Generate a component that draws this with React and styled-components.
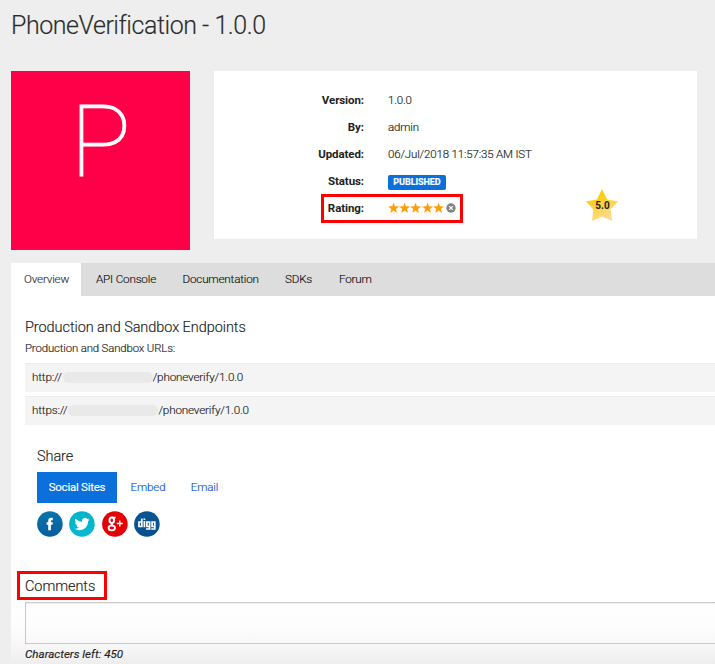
import React from "react";
import styled, { createGlobalStyle, css } from "styled-components";

const GlobalStyle = createGlobalStyle`
  * { box-sizing: border-box; }
  html, body { margin: 0; padding: 0; height: 664px; overflow: hidden; }
  body { background: #eeeeee; color: #222; font-family: Roboto, sans-serif; font-weight: 300; font-size: 12px; -webkit-text-stroke: 0.15px currentColor; }
  #root { height: 664px; }
`;

const Page = styled.div`
  width: 715px;
  height: 664px;
  overflow: hidden;
  padding-left: 11px;
`;

const Title = styled.h1`
  margin: 0;
  height: 71px;
  padding-top: 9px;
  color: #2c2c2c;
  font-size: 25px;
  font-weight: 300;
  letter-spacing: -0.46px;
  line-height: 34px;
  white-space: nowrap;
`;

const Summary = styled.section`
  display: flex;
  align-items: flex-start;
  height: 192px;
`;

const Thumbnail = styled.div`
  width: 179px;
  height: 179px;
  margin-right: 24px;
  background: #ff0048;
  color: #fff;
  text-align: center;
  font-size: 101px;
  font-weight: 100;
  line-height: 142px;
  -webkit-text-stroke: 1px #fff;
`;

const InfoCard = styled.div`
  display: flex;
  width: 483px;
  height: 168px;
  padding-top: 16px;
  background: #fff;
`;

const Details = styled.dl`
  display: grid;
  grid-template-columns: 150px 190px;
  grid-auto-rows: 27px;
  column-gap: 24px;
  margin: 0;
  height: 135px;
  line-height: 27px;
`;

const Term = styled.dt`
  font-size: 11.5px;
  font-weight: 700;
  letter-spacing: -0.08px;
  text-align: right;
  -webkit-text-stroke: 0;
`;

const Value = styled.dd`
  display: flex;
  align-items: center;
  margin: 0;
  font-size: 11.5px;
  letter-spacing: -0.16px;
  white-space: nowrap;
`;

const StatusBadge = styled.span`
  width: 58px;
  height: 15px;
  margin-top: 2px;
  border-radius: 2px;
  background: #0b70dc;
  color: #fff;
  font-size: 9px;
  font-weight: 700;
  letter-spacing: -0.05px;
  line-height: 15px;
  text-align: center;
`;

const highlight = css`
  border: 3px solid #ff0000;
`;

const RatingRow = styled.div`
  ${highlight}
  grid-column: 1 / -1;
  display: flex;
  align-items: center;
  width: 142px;
  height: 29px;
  margin: -1px 0 0 107px;
  padding-left: 3px;
`;

const RatingTerm = styled(Term)`
  width: 37px;
  margin-right: 24px;
`;

const Stars = styled.dd`
  display: flex;
  align-items: center;
  margin: 0 0 2px;
`;

const ScoreBadge = styled.div`
  display: grid;
  place-items: center;
  width: 32px;
  height: 33px;
  margin: 102px 0 0 8px;
  font-size: 10px;
  font-weight: 700;
  -webkit-text-stroke: 0;

  & > * { grid-area: 1 / 1; }
  & > span { padding-left: 1px; }
`;

const TabBar = styled.nav`
  display: flex;
  height: 33px;
  background: #dddddd;
`;

const Tab = styled.a`
  width: ${(p) => p.$width}px;
  padding-left: ${(p) => p.$inset}px;
  background: ${(p) => (p.$active ? "#fff" : "transparent")};
  color: ${(p) => (p.$active ? "#333" : "#111")};
  font-size: 11.7px;
  letter-spacing: -0.2px;
  line-height: 33px;
  white-space: nowrap;
`;

const Content = styled.main`
  display: flex;
  flex-direction: column;
  height: 368px;
  padding: 22px 0 0 14px;
  background: linear-gradient(#fff 300px, #fdfdfd 330px, #f7f7f7 350px, #eeeeee 368px);
`;

const Heading = styled.h2`
  margin: 0;
  font-size: 14.5px;
  font-weight: 300;
  letter-spacing: -0.07px;
  line-height: 20px;
`;

const Caption = styled.p`
  margin: 0;
  height: 25px;
  font-size: 11.4px;
  letter-spacing: -0.14px;
  line-height: 21px;
`;

const Endpoint = styled.div`
  display: flex;
  align-items: center;
  height: 29px;
  margin-bottom: 4px;
  padding: 0 0 2px 7px;
  border-top: 1px solid #ececec;
  background: #f4f4f4;
  font-size: 11.7px;
  letter-spacing: -0.18px;
`;

const Redaction = styled.span`
  width: ${(p) => p.$width}px;
  height: 11px;
  margin-left: 1px;
  border-radius: 5px;
  background: #e9e9e9;
`;

const Share = styled.section`
  height: 142px;
  padding: 18px 0 0 12px;
`;

const ShareTabs = styled.div`
  display: flex;
  height: 31px;
  margin-top: 5px;
`;

const ShareTab = styled.a`
  width: ${(p) => p.$width}px;
  background: ${(p) => (p.$active ? "#0b70dc" : "transparent")};
  color: ${(p) => (p.$active ? "#fff" : "#0e55dd")};
  font-size: 11.5px;
  font-weight: ${(p) => (p.$active ? 400 : 300)};
  letter-spacing: ${(p) => (p.$active ? -0.25 : -0.12)}px;
  line-height: 31px;
  text-align: center;
`;

const SocialRow = styled.div`
  display: flex;
  gap: 6.3px;
  margin-top: 8px;
`;

const CommentsTitle = styled.div`
  ${highlight}
  width: 90px;
  height: 29px;
  margin-left: -8px;
  padding: 3px 0 0 5px;
`;

const CommentInput = styled.textarea`
  flex: none;
  display: block;
  width: 700px;
  height: 42px;
  margin-top: 2px;
  border: 1px solid #c8c8c8;
  background: transparent;
  box-shadow: inset 0 1px 1px rgba(0, 0, 0, 0.06);
  resize: none;
  outline: none;
`;

const Counter = styled.p`
  margin: 1px 0 0;
  font-size: 11.6px;
  font-style: italic;
  font-weight: 400;
  line-height: 19px;
`;

const starPath = "M6 .2 7.4 4.2 11.9 4.3 8.4 7 9.7 11.4 6 8.8 2.3 11.4 3.6 7 .1 4.3 4.6 4.2Z";

function Star() {
  return (
    <svg width="11.2" height="12" viewBox="0 0 12 12"><path d={starPath} fill="#ff9c08" /></svg>
  );
}

function ClearIcon() {
  return (
    <svg width="10" height="10" viewBox="0 0 9 9">
      <circle cx="4.5" cy="4.5" r="4.2" fill="#808080" />
      <path d="M2.8 2.8 6.2 6.2M6.2 2.8 2.8 6.2" stroke="#fff" strokeWidth="1.1" />
    </svg>
  );
}

const ClearButton = styled.span`
  display: flex;
  margin-left: 2px;
`;

function ScoreStar() {
  return (
    <svg width="32" height="33" viewBox="0 0 32 33">
      <defs>
        <linearGradient id="gold" x1="0" y1="0" x2="0.45" y2="1">
          <stop offset="0.25" stopColor="#fccb05" />
          <stop offset="1" stopColor="#ffdb91" />
        </linearGradient>
      </defs>
      <path d="M16 .2 21.4 10.6 32 12.4 24.5 20.6 26.3 32 16 27.7 6 32 7.4 20.6 0 12.4 10.8 10.6Z" fill="url(#gold)" />
    </svg>
  );
}

function SocialIcon({ id, from, to, children }) {
  return (
    <svg width="26" height="26" viewBox="0 0 26 26">
      <defs>
        <linearGradient id={id} x1="0" y1="0" x2="0" y2="1">
          <stop offset="0" stopColor={from} />
          <stop offset="1" stopColor={to} />
        </linearGradient>
      </defs>
      <circle cx="12.9" cy="13" r="12.8" fill={`url(#${id})`} />
      {children}
    </svg>
  );
}

const tabs = [
  ["Overview", 70, 13],
  ["API Console", 87, 15],
  ["Documentation", 103, 14.5],
  ["SDKs", 54, 14],
  ["Forum", 80, 14],
];

export default function App() {
  return (
    <>
      <GlobalStyle />
      <Page>
        <Title>PhoneVerification - 1.0.0</Title>
        <Summary>
          <Thumbnail>P</Thumbnail>
          <InfoCard>
            <Details>
              <Term>Version:</Term><Value>1.0.0</Value>
              <Term>By:</Term><Value>admin</Value>
              <Term>Updated:</Term><Value>06/Jul/2018 11:57:35 AM IST</Value>
              <Term>Status:</Term><Value><StatusBadge>PUBLISHED</StatusBadge></Value>
              <RatingRow>
                <RatingTerm>Rating:</RatingTerm>
                <Stars>
                  {[1, 2, 3, 4, 5].map((n) => <Star key={n} />)}
                  <ClearButton><ClearIcon /></ClearButton>
                </Stars>
              </RatingRow>
            </Details>
            <ScoreBadge><ScoreStar /><span>5.0</span></ScoreBadge>
          </InfoCard>
        </Summary>
        <TabBar>
          {tabs.map(([label, width, inset], i) => (
            <Tab key={label} $width={width} $inset={inset} $active={i === 0}>{label}</Tab>
          ))}
        </TabBar>
        <Content>
          <Heading>Production and Sandbox Endpoints</Heading>
          <Caption>Production and Sandbox URLs:</Caption>
          <Endpoint>http://<Redaction $width={90} />/phoneverify/1.0.0</Endpoint>
          <Endpoint>https://<Redaction $width={90} />/phoneverify/1.0.0</Endpoint>
          <Share>
            <Heading>Share</Heading>
            <ShareTabs>
              <ShareTab $width={80} $active>Social Sites</ShareTab>
              <ShareTab $width={62}>Embed</ShareTab>
              <ShareTab $width={51}>Email</ShareTab>
            </ShareTabs>
            <SocialRow>
              <SocialIcon id="fb" from="#0874ad" to="#095c9d">
                <path d="M11.2 19.3V13.7H9.6V11.2H11.2V9.7C11.2 7.6 12.3 6.8 14.2 6.8H15.8V9.2H14.8C14.1 9.2 13.9 9.5 13.9 10.1V11.2H15.8L15.5 13.7H13.9V19.3Z" fill="#fff" />
              </SocialIcon>
              <SocialIcon id="tw" from="#00b5ca" to="#08b7d0">
                <path transform="translate(5.5 5.5) scale(.63)" d="M23.95 4.57a10 10 0 0 1-2.82.77 4.96 4.96 0 0 0 2.16-2.72c-.95.55-2 .95-3.12 1.18a4.92 4.92 0 0 0-8.38 4.48C7.69 8.09 4.07 6.13 1.64 3.16a4.92 4.92 0 0 0 1.52 6.57 4.9 4.9 0 0 1-2.23-.61v.06a4.92 4.92 0 0 0 3.95 4.83 5 5 0 0 1-2.21.08 4.94 4.94 0 0 0 4.6 3.42A9.87 9.87 0 0 1 0 19.54a13.99 13.99 0 0 0 7.55 2.21c9.06 0 14.01-7.5 14.01-13.98 0-.21 0-.42-.02-.63a9.94 9.94 0 0 0 2.41-2.57Z" fill="#fff" />
              </SocialIcon>
              <SocialIcon id="gp" from="#e50005" to="#e10006">
                <g fill="none" stroke="#fff">
                  <ellipse cx="9.8" cy="9.3" rx="2.3" ry="2.8" strokeWidth="2" />
                  <path d="M10 6.6H13.6M10.6 12.2C8.2 13 9.8 13.8 11.5 14.9" strokeWidth="1.7" />
                  <ellipse cx="9.8" cy="17" rx="3.2" ry="2.3" strokeWidth="1.8" />
                  <path d="M14.8 12.5H20.8M17.8 9.5V15.5" strokeWidth="1.4" />
                </g>
              </SocialIcon>
              <SocialIcon id="dg" from="#0a5595" to="#07508f">
                <g fill="none" stroke="#fff" strokeWidth="1.7">
                  <path d="M7.8 7.5V15.5H5V11H7.8M10.4 10.1V16.3M10.4 7.5V9M15.6 15.5H12.9V11H15.6V18H12M20.8 15.5H18.1V11H20.8V18H17.2" />
                </g>
              </SocialIcon>
            </SocialRow>
          </Share>
          <CommentsTitle><Heading>Comments</Heading></CommentsTitle>
          <CommentInput aria-label="Comments" />
          <Counter>Characters left: 450</Counter>
        </Content>
      </Page>
    </>
  );
}
